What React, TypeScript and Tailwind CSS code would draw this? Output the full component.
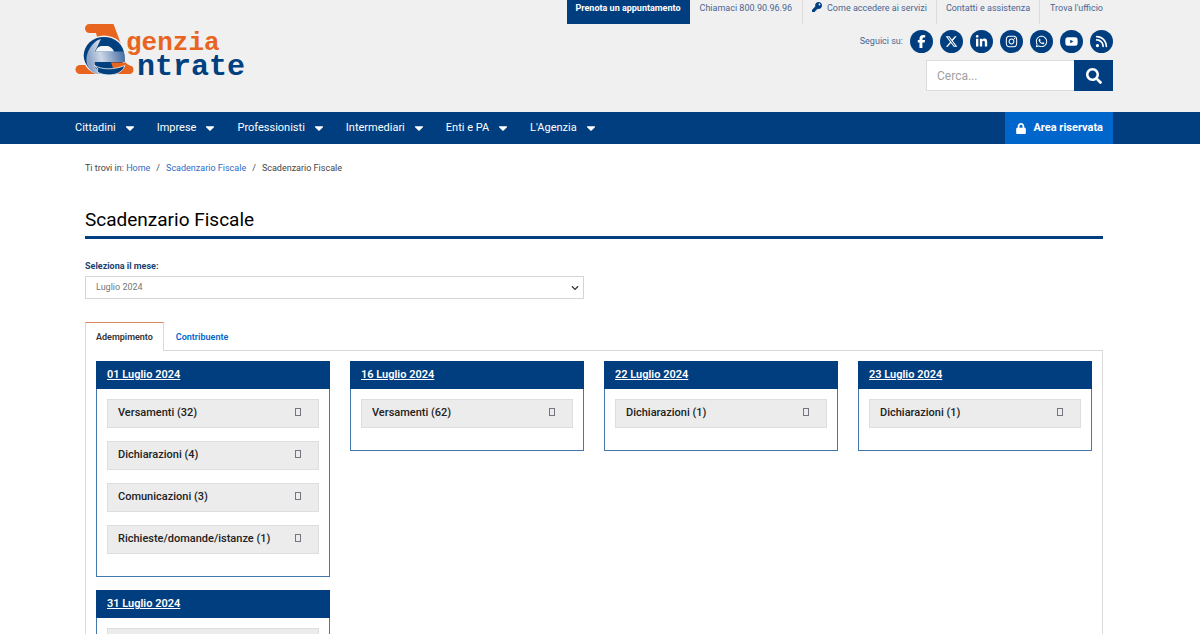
import React, { useState } from 'react';
import { FaFacebookF, FaXTwitter, FaLinkedinIn, FaInstagram, FaWhatsapp, FaYoutube, FaRss } from 'react-icons/fa6';
import { FaKey, FaLock, FaSearch, FaCaretDown, FaChevronDown } from 'react-icons/fa';

const socials = [
  { name: 'Facebook', icon: FaFacebookF },
  { name: 'X', icon: FaXTwitter },
  { name: 'LinkedIn', icon: FaLinkedinIn },
  { name: 'Instagram', icon: FaInstagram },
  { name: 'WhatsApp', icon: FaWhatsapp },
  { name: 'YouTube', icon: FaYoutube },
  { name: 'RSS', icon: FaRss },
];

const menu = ['Cittadini', 'Imprese', 'Professionisti', 'Intermediari', 'Enti e PA', "L'Agenzia"];

const deadlines = [
  {
    date: '01 Luglio 2024',
    items: ['Versamenti (32)', 'Dichiarazioni (4)', 'Comunicazioni (3)', 'Richieste/domande/istanze (1)'],
  },
  { date: '16 Luglio 2024', items: ['Versamenti (62)'] },
  { date: '22 Luglio 2024', items: ['Dichiarazioni (1)'] },
  { date: '23 Luglio 2024', items: ['Dichiarazioni (1)'] },
  { date: '31 Luglio 2024', items: ['Versamenti (12)'] },
];

function Logo() {
  return (
    <svg viewBox="0 0 176 64" className="h-16 w-44" role="img" aria-label="Agenzia Entrate">
      <defs>
        <linearGradient id="e-fill" x1="0" x2="1" y1="0.2" y2="0">
          <stop offset="0" stopColor="#8fa5c8" />
          <stop offset="0.3" stopColor="#cdd7e8" />
          <stop offset="1" stopColor="#2d5c98" />
        </linearGradient>
      </defs>
      {/* "A" behind the globe */}
      <path d="M14.500 2H38.500L46 22H24L21 11H14.500a4.500 4.500 0 0 1 0-9Z" fill="#e8651f" />
      <path d="M5 43h10l7 9H5a4.500 4.500 0 0 1 0-9Z" fill="#e8651f" />
      <path d="M34 41h16l5 2.500a4.300 4.300 0 0 1-.500 8.500H34Z" fill="#e8651f" />
      {/* globe with the "e" */}
      <ellipse cx="29" cy="33.500" rx="21.500" ry="20" fill="#f0f0f0" />
      <ellipse cx="29" cy="33.500" rx="20.300" ry="18.600" fill="#00407f" />
      <path
        d="M23 18C14 23 8 37 14 46c2 4 6 6 10 6l1-2c-4-3-6-6-5-10h30c0-4 0-7-1.500-10.500H20L26 17Z"
        fill="url(#e-fill)"
      />
      <path d="M20.500 29.500c1-3 3-5 5.500-5.500h7c3 1 5 3 6 5.500Z" fill="#f4f5f8" />
      <path d="M36 40.500h15l1 2.500-8 4-6-1Z" fill="#e8651f" />
      <path d="M19 43c7 5 20 5 31 .500C47 53 34 55 24 51l-2-2 1-2Z" fill="#00407f" stroke="#f0f0f0" strokeWidth="0.800" />
      <text x="51" y="28" fontFamily="Liberation Mono, monospace" fontWeight="700" fontSize="26" fill="#e8651f">genzia</text>
      <text x="62" y="53" fontFamily="Liberation Mono, monospace" fontWeight="700" fontSize="30" fill="#00407f">ntrate</text>
    </svg>
  );
}

function Header() {
  return (
    <header className="bg-[#f0f0f0]">
      <div className="mx-auto flex min-h-28 w-full max-w-[1050px] justify-between pr-3">
        <a href="#" className="mt-[22px]">
          <Logo />
        </a>
        <div className="flex flex-col items-end">
          <div className="flex h-6 text-[9px] leading-4 text-[#4a6591]">
            <a href="#" className="bg-[#003e80] px-[9px] font-bold text-white">Prenota un appuntamento</a>
            <a href="#" className="px-2.5">Chiamaci 800.90.96.96</a>
            <a href="#" className="flex gap-[5px] border-l border-[#dcdcdc] px-[9px]">
              <FaKey className="mt-0.5 h-2.5 w-2.5 text-[#003e80]" />
              Come accedere ai servizi
            </a>
            <a href="#" className="border-l border-[#dcdcdc] px-[9px]">Contatti e assistenza</a>
            <a href="#" className="border-l border-[#dcdcdc] px-2.5">Trova l'ufficio</a>
          </div>
          <div className="mt-1.5 flex items-center gap-[7px]">
            <span className="text-[9px] text-[#4a6591]">Seguici su:</span>
            {socials.map(({ name, icon: Icon }) => (
              <a
                key={name}
                href="#"
                aria-label={name}
                className="flex h-[23px] w-[23px] items-center justify-center rounded-full bg-[#003e80] text-white"
              >
                <Icon className="h-[13px] w-[13px]" />
              </a>
            ))}
          </div>
          <form className="mt-[7px] flex" onSubmit={(e) => e.preventDefault()}>
            <input
              type="text"
              aria-label="Cerca"
              placeholder="Cerca..."
              className="h-[31px] w-[148px] border border-r-0 border-[#dcdcdc] bg-white px-2.5 text-xs placeholder:text-[#a0a0a0]"
            />
            <button type="submit" aria-label="Cerca" className="flex h-[31px] w-[39px] items-center justify-center bg-[#003e80] text-white">
              <FaSearch className="h-4 w-4" />
            </button>
          </form>
        </div>
      </div>
    </header>
  );
}

function MainNav() {
  return (
    <nav className="bg-[#003e80] text-white">
      <div className="mx-auto flex h-8 w-full max-w-[1050px] items-stretch justify-between pr-3 text-[11px]">
        <div className="flex items-center gap-[22px]">
          {menu.map((label) => (
            <button key={label} type="button" className="flex items-center gap-[9px]">
              {label}
              <FaCaretDown className="h-3.5 w-2.5" />
            </button>
          ))}
        </div>
        <a href="#" className="flex items-center gap-1.5 bg-[#0066cc] px-2.5 font-bold">
          <FaLock className="h-[11px] w-3" />
          Area riservata
        </a>
      </div>
    </nav>
  );
}

function DeadlineCard({ date, items }: { date: string; items: string[] }) {
  return (
    <section className="border border-[#4478ad] pb-[22px]">
      <h2 className="-mx-px -mt-px bg-[#003e80] px-[11px] text-[11px] leading-7 font-semibold text-white">
        <a href="#" className="underline">{date}</a>
      </h2>
      <ul className="flex flex-col gap-[13px] px-2.5 pt-2.5">
        {items.map((item) => (
          <li key={item}>
            <button
              type="button"
              className="flex h-[29px] w-full items-center justify-between border border-[#dedede] bg-[#ececec] pr-[17px] pl-2.5 text-[11px] font-medium text-[#222]"
            >
              {item}
              <span className="mb-[3px] h-2 w-1.5 border border-[#77737f]" />
            </button>
          </li>
        ))}
      </ul>
    </section>
  );
}

export default function App() {
  const [tab, setTab] = useState('Adempimento');

  return (
    <div className="min-h-screen bg-white font-[Roboto,sans-serif] text-[#222]">
      <Header />
      <MainNav />
      <main className="mx-auto w-full max-w-[1050px] pr-[22px] pl-2.5">
        <nav aria-label="Breadcrumb" className="flex gap-1.5 pt-4 text-[9px] leading-4 text-[#444]">
          <span>
            Ti trovi in: <a href="#" className="text-[#2e6bc6]">Home</a>
          </span>
          <span>/</span>
          <a href="#" className="text-[#2e6bc6]">Scadenzario Fiscale</a>
          <span>/</span>
          <span>Scadenzario Fiscale</span>
        </nav>

        <h1 className="mt-7 border-b-[3px] border-[#003e80] text-[19px] leading-8 text-black">Scadenzario Fiscale</h1>

        <div className="mt-[19px] w-[49%]">
          <label htmlFor="mese" className="block text-[9px] leading-4 font-bold text-[#1b3f70]">
            Seleziona il mese:
          </label>
          <div className="relative mt-0.5">
            <select id="mese" className="block h-[23px] w-full appearance-none border border-[#d5d5d5] bg-white px-2.5 text-[9px] text-[#777]">
              <option>Luglio 2024</option>
            </select>
            <FaChevronDown className="pointer-events-none absolute top-2 right-[5px] h-2 w-2 text-[#333]" />
          </div>
        </div>

        <div role="tablist" className="relative z-10 -mb-px mt-[23px] flex gap-px">
          {['Adempimento', 'Contribuente'].map((name) => (
            <button
              key={name}
              type="button"
              role="tab"
              aria-selected={tab === name}
              onClick={() => setTab(name)}
              className={`h-[29px] border-x border-t px-2.5 pt-0.5 text-[9px] font-semibold ${
                tab === name
                  ? 'border-x-[#d9d9d9] border-t-[#d98a64] bg-white text-[#333]'
                  : 'border-transparent text-[#0066cc]'
              }`}
            >
              {name}
            </button>
          ))}
        </div>
        <div role="tabpanel" className="grid grid-cols-4 items-start gap-x-5 gap-y-[13px] border border-[#d9d9d9] p-2.5">
          {deadlines.map((d) => (
            <DeadlineCard key={d.date} date={d.date} items={d.items} />
          ))}
        </div>
      </main>
    </div>
  );
}
